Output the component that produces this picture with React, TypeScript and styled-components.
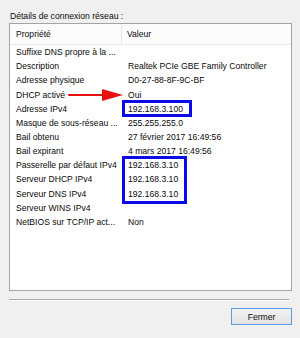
import * as React from 'react';
import styled, { createGlobalStyle } from 'styled-components';

const rows: [string, string][] = [
  ['Suffixe DNS propre à la ...', ''],
  ['Description', 'Realtek PCIe GBE Family Controller'],
  ['Adresse physique', 'D0-27-88-8F-9C-BF'],
  ['DHCP activé', 'Oui'],
  ['Adresse IPv4', '192.168.3.100'],
  ['Masque de sous-réseau ...', '255.255.255.0'],
  ['Bail obtenu', '27 février 2017 16:49:56'],
  ['Bail expirant', '4 mars 2017 16:49:56'],
  ['Passerelle par défaut IPv4', '192.168.3.10'],
  ['Serveur DHCP IPv4', '192.168.3.10'],
  ['Serveur DNS IPv4', '192.168.3.10'],
  ['Serveur WINS IPv4', ''],
  ['NetBIOS sur TCP/IP act...', 'Non'],
];

export default function App() {
  return (
    <>
      <GlobalStyle />
      <Dialog>
        <Caption>Détails de connexion réseau :</Caption>
        <ListBox>
          <Header>
            <HeaderCell $divider>Propriété</HeaderCell>
            <HeaderCell>Valeur</HeaderCell>
          </Header>
          {rows.map(([name, value], index) => (
            <Row key={`row-${index}`}>
              <NameCell>{name}</NameCell>
              <ValueCell>{value}</ValueCell>
            </Row>
          ))}
          {/* annotations drawn over the list */}
          <Highlight style={{ left: 112, top: 76, width: 70, height: 17 }} />
          <Highlight style={{ left: 112, top: 132, width: 65, height: 48 }} />
          <Arrow width="58" height="14" viewBox="0 0 58 14">
            <line x1="2" y1="7" x2="38" y2="7" stroke="#e81010" strokeWidth="2" strokeLinecap="round" />
            <polygon points="35,1 56,7 35,13" fill="#e81010" />
          </Arrow>
        </ListBox>
        <Separator />
        <Footer>
          <Button>Fermer</Button>
        </Footer>
      </Dialog>
    </>
  );
}

const GlobalStyle = createGlobalStyle`
  html, body {
    margin: 0;
    background: #f0f0f0;
  }
  body {
    font-family: "Liberation Sans", Arial, sans-serif;
    font-size: 8.6px;
    color: #0a0a0a;
  }
`;

const Dialog = styled.div`
  width: 300px;
  height: 338px;
  box-sizing: border-box;
  padding: 0 8px 0 9px;
  display: flex;
  flex-direction: column;
`;

const Caption = styled.div`
  height: 23px;
  box-sizing: border-box;
  padding: 8px 0 0 1px;
  display: flex;
  align-items: center;
  white-space: nowrap;
`;

const ListBox = styled.div`
  position: relative;
  height: 268px;
  box-sizing: border-box;
  border: 1px solid #a4a4a4;
  background: #fff;
  overflow: hidden;
`;

const Header = styled.div`
  display: grid;
  grid-template-columns: 112px 1fr;
  height: 20px;
  background: #fcfcfc;
  border-bottom: 1px solid #e3e8ee;
`;

const HeaderCell = styled.div<{ $divider?: boolean }>`
  display: flex;
  align-items: center;
  padding-left: ${(p) => (p.$divider ? '6px' : '5px')};
  border-right: ${(p) => (p.$divider ? '1px solid #e5e5e5' : 'none')};
  white-space: nowrap;
`;

const Row = styled.div`
  display: grid;
  grid-template-columns: 113px 1fr;
  height: 14.17px;
  align-items: center;
  white-space: nowrap;
`;

const NameCell = styled.span`
  padding-left: 6px;
  overflow: hidden;
`;

const ValueCell = styled.span`
  padding-left: 5px;
`;

const Highlight = styled.div`
  position: absolute;
  box-sizing: border-box;
  border: 3px solid #0a0ae6;
`;

const Arrow = styled.svg`
  position: absolute;
  left: 57px;
  top: 64px;
`;

const Separator = styled.div`
  margin-top: 8px;
  width: 280px;
  border-top: 1px solid #a9a9a9;
  border-bottom: 1px solid #fdfdfd;
`;

const Footer = styled.div`
  display: flex;
  justify-content: flex-end;
  margin-top: 7px;
`;

const Button = styled.button`
  width: 61px;
  height: 17px;
  padding: 0;
  border: 1px solid #5a9de0;
  background: linear-gradient(#f2f2f2, #e3e3e3);
  font-family: "Liberation Sans", Arial, sans-serif;
  font-size: 8.6px;
  color: #0a0a0a;
`;
